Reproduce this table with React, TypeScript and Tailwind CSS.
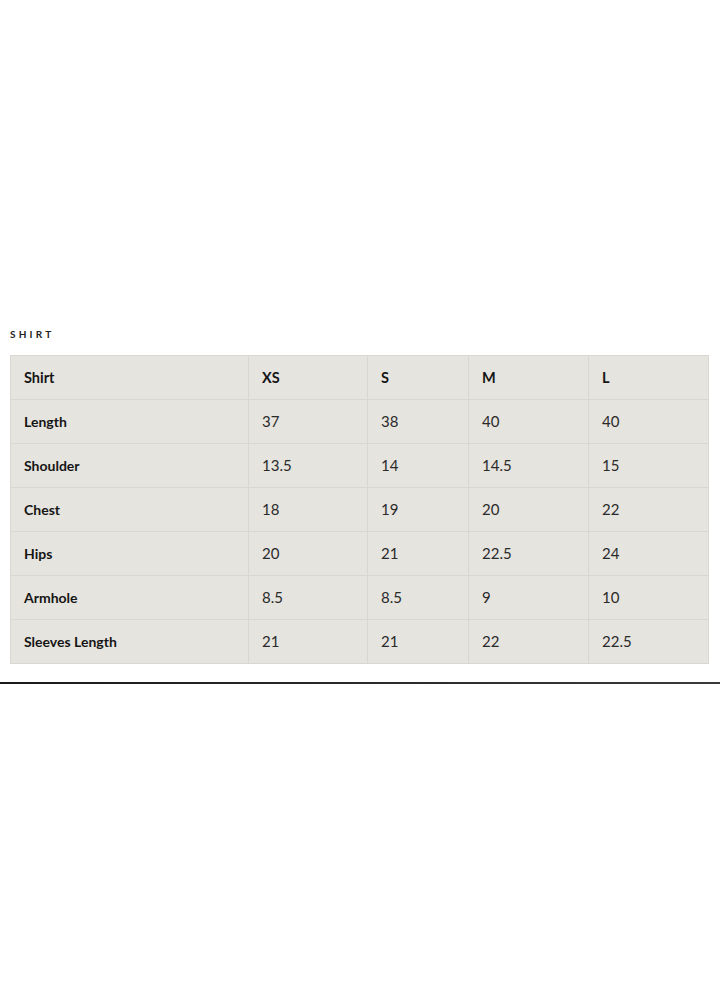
import React from "react";

const rows: string[][] = [
  ["Length", "37", "38", "40", "40"],
  ["Shoulder", "13.5", "14", "14.5", "15"],
  ["Chest", "18", "19", "20", "22"],
  ["Hips", "20", "21", "22.5", "24"],
  ["Armhole", "8.5", "8.5", "9", "10"],
  ["Sleeves Length", "21", "21", "22", "22.5"],
];

const head = ["Shirt", "XS", "S", "M", "L"];

export default function App() {
  return (
    <div
      className="w-[720px] h-[1002px] bg-white relative"
      style={{ fontFamily: "Lato, 'Open Sans', sans-serif" }}
    >
      <div className="pt-[328px] pl-[10px]">
        <div className="text-[10px] font-bold tracking-[3.2px] text-[#222] leading-[12px]">SHIRT</div>
      </div>
      <div className="pl-[10px] pt-[15px]">
        <div className="grid grid-cols-[237px_118px_100px_119px_119px] gap-px bg-[#d9d7d2] border border-[#d9d7d2] w-[699px]">
          {head.map((h, i) => (
            <div
              key={i}
              className="h-[43px] bg-[#e6e4df] flex items-center pl-[13px] text-[14.5px] font-bold text-[#151515]"
            >
              {h}
            </div>
          ))}
          {rows.map((r, ri) =>
            r.map((c, ci) => (
              <div
                key={ri + "-" + ci}
                className={
                  "h-[43px] bg-[#e6e4df] flex items-center pl-[13px] " +
                  (ci === 0
                    ? "text-[14px] font-bold text-[#151515]"
                    : "text-[15px] font-normal text-[#2a2a2a]")
                }
              >
                {c}
              </div>
            ))
          )}
        </div>
      </div>
      <div className="mt-[18px] h-[2px] w-full bg-gradient-to-r from-[#1a1a1a] to-[#3a3a3a]"></div>
    </div>
  );
}
